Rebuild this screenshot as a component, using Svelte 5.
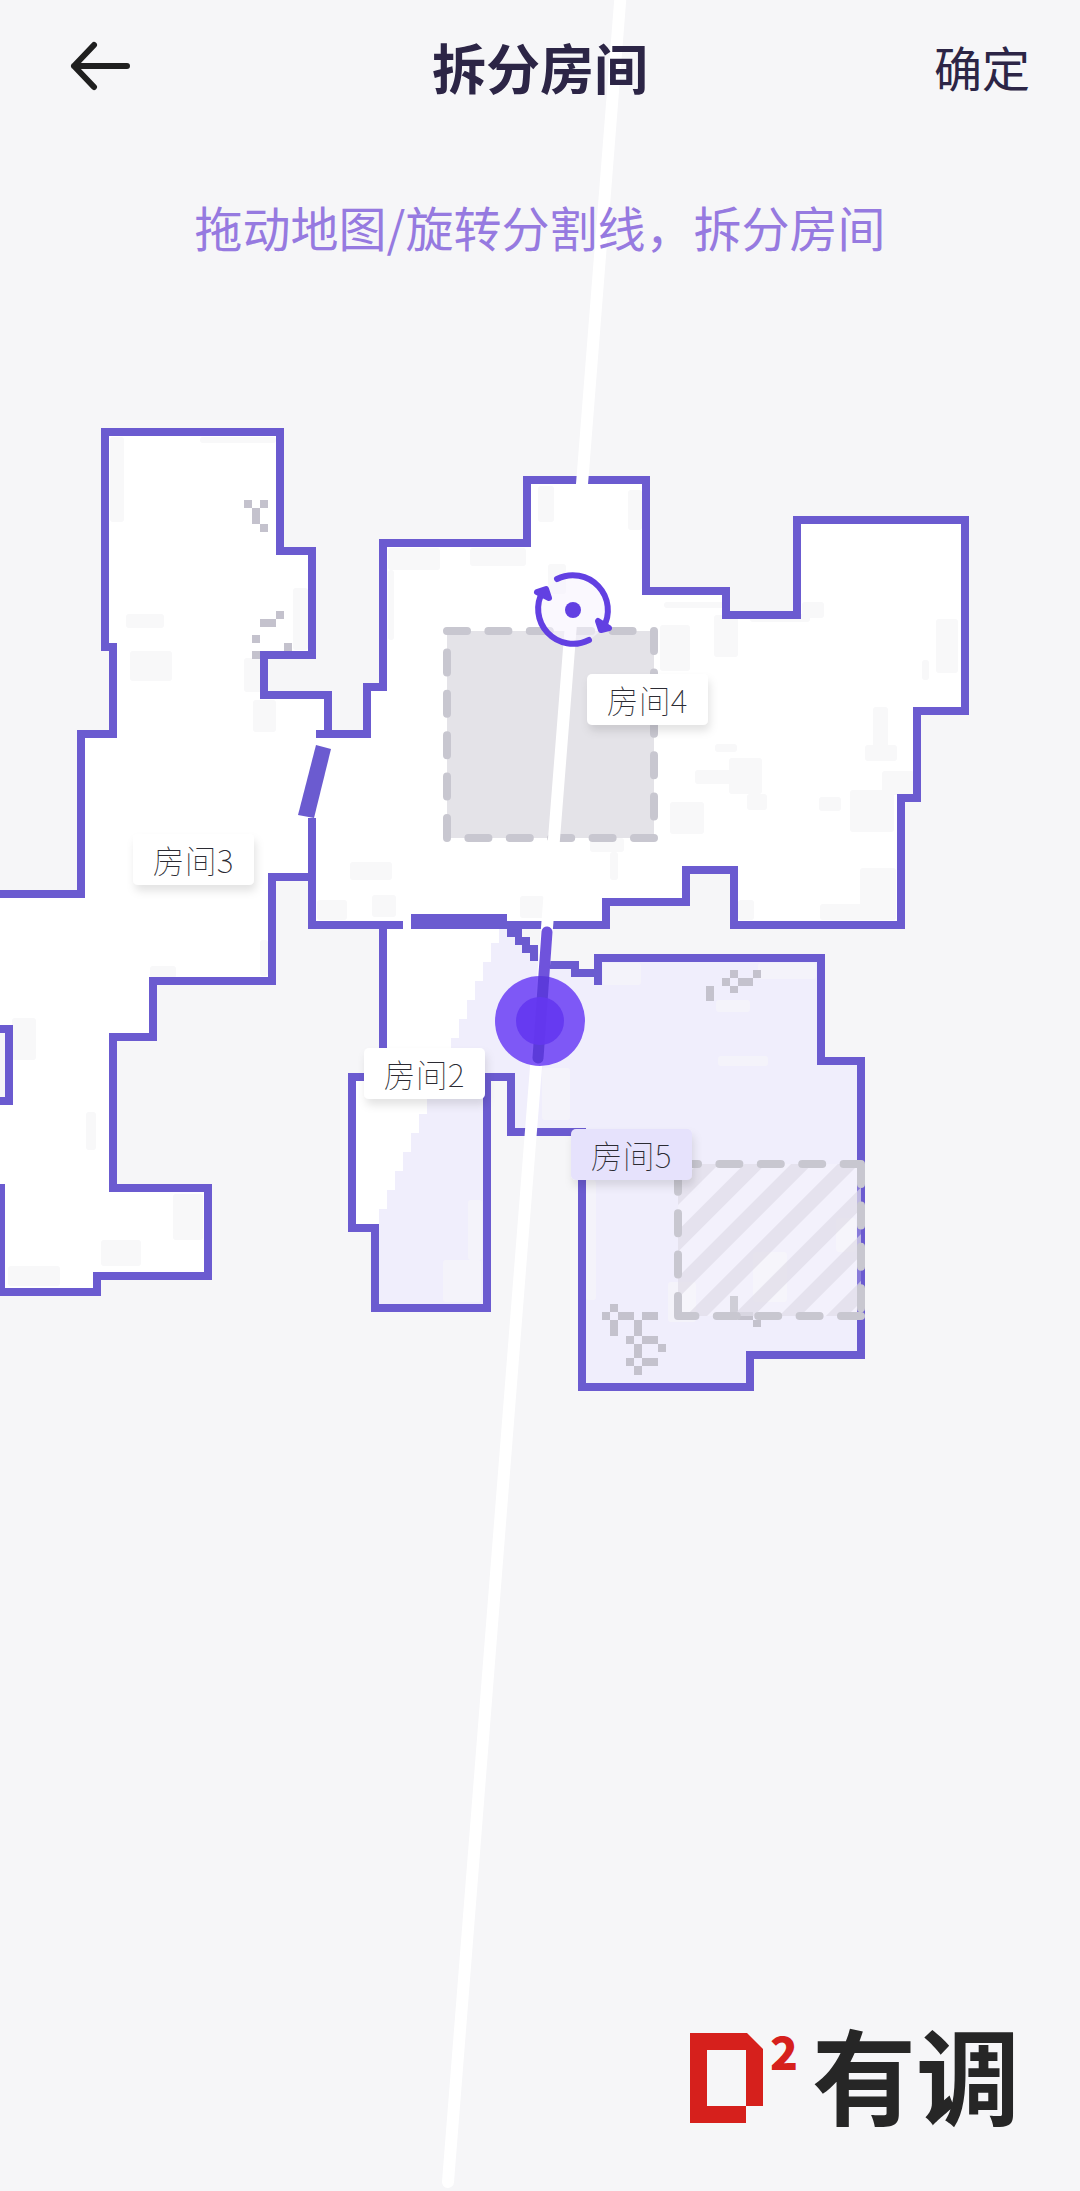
<script>
  const WALL = "#6b5bd0";

  // rooms in map units, walls are drawn along the same points
  const hallFill =
    "M105 432H280V551H312V655H264V695H328V734H367V687H383V543H527V480H646V591H726V615H797V520H965V711H917V798H901V925H734V870H686V902H606V925H312V877H272V981H153V1037H113V1188H208V1276H97V1292H0V1101H9V1029H0V894H81V734H113V647H105Z";

  const walls = [
    "M0 894H81V734H113V647H105V432H280V551H312V655H264V695H328V734",
    "M316 734H367V687H383V543H527V480H646V591H726V615H797V520H965V711H917V798H901V925H734V870H686V902H606V925H507",
    "M403 925H312V818",
    "M312 877H272V981H153V1037H113V1188H208V1276H97V1292H1V1184",
    "M0 1029H9V1101H0",
    "M383 925V1077H352V1228H375V1308H487V1077H511V1132H582V1387H750V1355H861V1061H821V958H598V985",
    "M598 973H575V965H548",
  ];

  // obstacle cells, 8 units a side: [x, y, w, h]
  const obstacles = [
    [244, 500, 8, 8], [260, 500, 8, 8], [252, 508, 8, 16], [260, 524, 8, 8],
    [276, 611, 8, 8], [260, 619, 16, 8], [252, 635, 8, 8], [284, 643, 8, 8], [252, 651, 8, 8],
    [730, 970, 8, 8], [722, 978, 8, 8], [738, 978, 15, 8], [753, 970, 8, 8],
    [730, 986, 8, 7], [706, 986, 8, 15],
    [610, 1304, 8, 8], [602, 1312, 8, 8], [618, 1312, 16, 8], [642, 1312, 16, 8],
    [610, 1320, 8, 16], [634, 1320, 8, 16], [626, 1336, 8, 8], [642, 1336, 16, 8],
    [634, 1344, 8, 14], [658, 1344, 8, 8], [626, 1358, 8, 8], [642, 1358, 16, 8],
    [634, 1366, 8, 9], [730, 1296, 8, 16], [738, 1312, 15, 8], [753, 1320, 8, 7],
  ];

  // barely visible unswept floor
  const unswept = [
    [110, 437, 14, 85], [200, 437, 76, 6], [126, 614, 38, 14], [130, 651, 42, 30],
    [293, 588, 15, 62], [244, 658, 18, 34], [253, 700, 23, 32],
    [388, 548, 52, 22], [470, 548, 56, 18], [538, 486, 16, 36], [628, 490, 14, 40],
    [548, 564, 18, 30], [388, 570, 6, 70], [664, 602, 60, 6], [660, 625, 30, 46],
    [714, 615, 24, 42], [750, 614, 60, 8], [802, 602, 22, 16], [936, 619, 22, 54],
    [922, 660, 7, 20], [873, 707, 15, 54], [865, 745, 32, 16], [850, 790, 44, 42],
    [882, 771, 32, 24], [819, 797, 22, 14], [729, 758, 33, 36], [695, 770, 36, 14],
    [747, 794, 20, 16], [670, 802, 34, 32], [715, 744, 22, 8], [590, 838, 34, 14],
    [610, 852, 8, 28], [350, 862, 42, 18], [317, 900, 30, 20], [372, 895, 24, 22],
    [520, 896, 24, 22], [860, 868, 36, 52], [820, 904, 76, 16], [738, 900, 16, 20],
    [150, 966, 26, 12], [12, 1018, 24, 42], [86, 1112, 10, 38], [173, 1194, 30, 46],
    [101, 1240, 40, 26], [8, 1266, 52, 20], [260, 940, 8, 36],
  ];

  // paler floor along the edges of the selected room
  const selectedUnswept = [
    [603, 963, 38, 22], [716, 1000, 34, 12], [758, 963, 58, 16], [718, 1056, 50, 10],
    [542, 1068, 28, 52], [443, 1260, 38, 42], [468, 1200, 14, 60], [586, 1180, 10, 120],
    [668, 1282, 28, 40], [753, 1252, 34, 50], [836, 1218, 20, 34],
  ];

  // stepped border between room 2 and the selected room
  function steps() {
    let x = 379;
    let y = 1228;
    let d = "";
    while (x < 507) {
      y -= 19;
      x += 8;
      d += `V${y}H${x}`;
    }
    return d;
  }

  const selectedFill = `M379 1228${steps()}V933H515V945H530V961H548V965H575V973H598V958H821V1061H861V1355H750V1387H582V1132H511V1077H487V1308H375V1228Z`;

  const labels = [
    { name: "房间4", x: 587, y: 674 },
    { name: "房间3", x: 133, y: 834 },
    { name: "房间2", x: 364, y: 1048 },
    { name: "房间5", x: 571, y: 1129, selected: true },
  ];
</script>

<main>
  <svg class="map" viewBox="0 0 1080 2191" role="img" aria-label="地图">
    <defs>
      <pattern id="hatch" width="33" height="33" patternUnits="userSpaceOnUse" patternTransform="translate(678 1164) rotate(45)">
        <rect x="14" width="15" height="33" fill="#dddae6" />
      </pattern>
      <filter id="shadow" x="-20%" y="-30%" width="140%" height="180%">
        <feDropShadow dx="2" dy="6" stdDeviation="4" flood-color="#000" flood-opacity="0.11" />
      </filter>
    </defs>

    <path d={hallFill} fill="#fff" />
    <path d="M383 925H507V1077H487V1308H375V1228H352V1077H383Z" fill="#fff" />
    {#each unswept as [x, y, w, h]}
      <rect {x} {y} width={w} height={h} rx="3" fill="#f8f8f9" />
    {/each}
    <path d={selectedFill} fill="#f0eefc" />
    {#each selectedUnswept as [x, y, w, h]}
      <rect {x} {y} width={w} height={h} rx="3" fill="#f4f3fa" />
    {/each}

    {#each obstacles as [x, y, w, h]}
      <rect {x} {y} width={w} height={h} fill="#c4c2cd" />
    {/each}

    {#each walls as d}
      <path {d} fill="none" stroke={WALL} stroke-width="8" />
    {/each}
    <path d="M507 921H541V929H522V937H530V945H538V961H530V953H522V945H515V937H507Z" fill={WALL} />

    <!-- doors -->
    <rect x="411" y="914" width="96" height="15" fill={WALL} />
    <path d="M316 745L331 749L314 818L298 815Z" fill={WALL} />

    <!-- carpet -->
    <rect class="dashed" x="447" y="631" width="207" height="207" fill="#e4e3e8" />

    <!-- restricted zone -->
    <rect x="678" y="1164" width="183" height="152" fill="#fff" opacity="0.2" />
    <rect x="678" y="1164" width="183" height="152" fill="url(#hatch)" opacity="0.65" />
    <path class="dashed" d="M678 1164H861M861 1164V1316M861 1316H678M678 1316V1164" />

    <!-- split line with its handles -->
    <path d="M621 -10L448 2182" stroke="#fff" stroke-width="12" stroke-linecap="round" />
    <circle cx="573" cy="610" r="34" fill="#f7f4fd" opacity="0.6" />
    <g class="rotate">
      <path d="M557 579A35 35 0 0 1 603 628" />
      <path d="M589 640A35 35 0 0 1 543 591" />
      <path class="head" d="M598 621L601 630L609 628Z" />
      <path class="head" d="M537 592L546 589L549 598Z" />
      <circle cx="573" cy="610" r="8" />
    </g>
    <circle cx="540" cy="1021" r="45" fill="#6a3df5" opacity="0.85" />
    <path d="M547 932L538 1058" stroke="#5636d6" stroke-width="11" stroke-linecap="round" opacity="0.85" />
    <circle cx="540" cy="1021" r="24" fill="#6437f0" opacity="0.92" />

    {#each labels as label}
      <g>
        <rect
          x={label.x}
          y={label.y}
          width="121"
          height="51"
          rx="5"
          fill={label.selected ? "#e6e2fc" : "#fff"}
          filter="url(#shadow)"
        />
        <text class="room" x={label.x + 60} y={label.y + 39}>{label.name}</text>
      </g>
    {/each}
  </svg>

  <div class="overlay">
    <header>
      <button class="back" aria-label="返回">
        <svg width="62" height="50" viewBox="0 0 62 50">
          <path d="M24 4L4 25L24 46M4 25H57" />
        </svg>
      </button>
      <h1>拆分房间</h1>
      <button class="confirm">确定</button>
    </header>
    <p class="hint">拖动地图/旋转分割线，拆分房间</p>

    <footer>
      <svg class="mark" width="74" height="92" viewBox="0 0 74 92" aria-hidden="true">
        <path fill-rule="evenodd" d="M0 0H57L73 16V73H56V90H0ZM17 17V73H56V17Z" fill="#d6201c" />
      </svg>
      <span class="square">2</span>
      <span class="brand">有调</span>
    </footer>
  </div>
</main>

<style>
  :global(body) {
    background: #f6f6f8;
  }

  main {
    display: grid;
    overflow: hidden;
    font-family: "Noto Sans CJK SC", "Noto Sans", sans-serif;
  }

  .map,
  .overlay {
    grid-area: 1 / 1;
  }

  .map {
    display: block;
    width: 100%;
  }

  .dashed {
    stroke: #c8c7d0;
    stroke-width: 8;
    stroke-linecap: round;
    stroke-dasharray: 20 21.4;
  }

  .rotate {
    fill: #6240e2;
  }

  .rotate path {
    fill: none;
    stroke: #6240e2;
    stroke-width: 6;
    stroke-linecap: round;
    stroke-linejoin: round;
  }

  .rotate .head {
    fill: #6240e2;
  }

  .room {
    fill: #2b2b33;
    font-size: 32px;
    font-weight: 100;
    text-anchor: middle;
  }

  .overlay {
    display: flex;
    flex-direction: column;
  }

  header {
    display: grid;
    grid-template-columns: 1fr auto 1fr;
    align-items: center;
    height: 132px;
    padding: 0 50px;
    box-sizing: border-box;
  }

  button {
    padding: 0;
    border: 0;
    background: none;
    font-family: inherit;
    cursor: pointer;
  }

  .back {
    display: flex;
    justify-self: start;
    padding-left: 20px;
  }

  .back path {
    fill: none;
    stroke: #1f1f1f;
    stroke-width: 6;
    stroke-linecap: round;
    stroke-linejoin: round;
  }

  h1 {
    margin: 0;
    color: #2c2546;
    font-size: 54px;
    font-weight: 700;
  }

  .confirm {
    justify-self: end;
    color: #2c2546;
    font-size: 48px;
  }

  .hint {
    margin: 58px 0 0;
    color: #967ae0;
    font-size: 48px;
    line-height: 72px;
    text-align: center;
  }

  footer {
    display: flex;
    align-items: flex-start;
    justify-content: flex-end;
    margin-top: auto;
    padding: 0 60px 66px 0;
  }

  .mark {
    margin-right: 6px;
  }

  .square {
    margin-right: 14px;
    color: #d6201c;
    font-size: 46px;
    font-weight: 900;
    line-height: 34px;
  }

  .brand {
    color: #262626;
    font-size: 104px;
    font-weight: 700;
    line-height: 80px;
  }
</style>
